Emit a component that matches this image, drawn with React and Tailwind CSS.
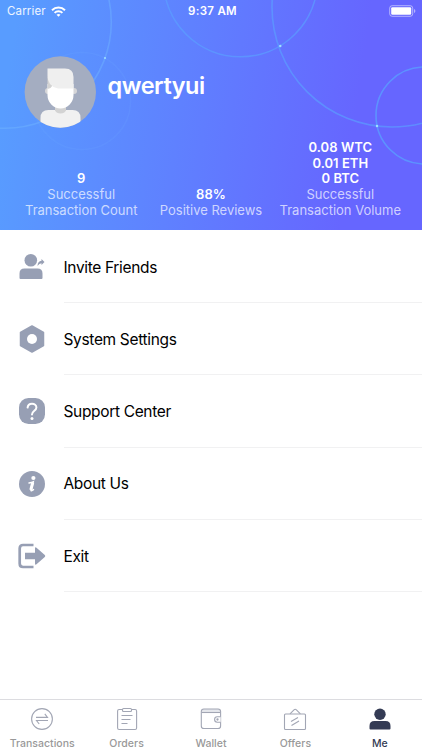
const ICON = '#979fb4';
const LINE = '#a2a6b4';

function HeaderCircles() {
  return (
    <svg className="absolute inset-0" width="422" height="230" viewBox="0 0 422 230" fill="none" strokeWidth="1.6">
      <circle cx="5" cy="22" r="106.3" stroke="#72b6ff" strokeOpacity=".45" />
      <circle cx="82" cy="101" r="48.5" stroke="#72b0ff" strokeOpacity=".13" />
      <circle cx="240.5" cy="-20.2" r="77" stroke="#5aa2ff" strokeOpacity=".65" />
      <circle cx="392" cy="7" r="120" stroke="#5aa2ff" strokeOpacity=".65" />
      <circle cx="424.5" cy="115.5" r="48.5" stroke="#5aa2ff" strokeOpacity=".75" />
      <g fill="#9fe0ff">
        <circle cx="105" cy="58" r="1" />
        <circle cx="280.3" cy="46" r="1.2" />
        <circle cx="377" cy="126" r="1.2" />
      </g>
    </svg>
  );
}

function Avatar() {
  return (
    <svg width="72" height="72" viewBox="0 0 72 72">
      <defs>
        <clipPath id="face">
          <circle cx="36.300" cy="36" r="35.7" />
        </clipPath>
      </defs>
      <g clipPath="url(#face)">
        <rect width="72" height="72" fill="#a4adc1" />
        <path d="M16.500 72V62q0-8 8-8h24q8 0 8 8v10z" fill="#f1f1f1" />
        <path d="M31 49h11v5.500q-1.500 3-5.500 3t-5.500-3z" fill="#d3d3d3" />
        <circle cx="24" cy="35" r="3" fill="#d6d6d8" />
        <circle cx="50" cy="35" r="3" fill="#d6d6d8" />
        <path d="M23.500 28h26v11a13 13.500 0 0 1-26 0z" fill="#fff" />
        <path d="M23.500 20l5 9.500-2 2.500-3 1z" fill="#d3d3d3" />
        <path d="M23.500 12.500H41q8.500 0 8.500 8.500v11.500H34q-10.500-2-10.500-13z" fill="#efefef" />
      </g>
    </svg>
  );
}

function InviteIcon() {
  return (
    <svg width="28" height="28" viewBox="0 0 28 28" fill={ICON}>
      <circle cx="12.800" cy="7.300" r="6.300" />
      <path d="M1.500 26V20.500q0-5 5-5h13q5 0 5 5V25q0 1-1 1h-21q-1 0-1-1z" />
      <path d="M19.500 13q.2-5 4-5.200V6l3 3-3 3v-1.800q-2.300.1-4 2.800z" />
    </svg>
  );
}

function SettingsIcon() {
  return (
    <svg width="28" height="28" viewBox="0 0 28 28">
      <path d="M14 1 25.500 7.500v13L14 27 2.500 20.500v-13z" fill={ICON} stroke={ICON} strokeWidth="1.500" strokeLinejoin="round" />
      <circle cx="14" cy="14" r="5" fill="#fff" />
    </svg>
  );
}

function SupportIcon() {
  return (
    <svg width="28" height="28" viewBox="0 0 28 28">
      <rect x="1" y="1" width="26" height="26" rx="9.500" fill={ICON} />
      <path d="M9.600 10.600c.2-2.500 2-3.900 4.400-3.900s4.400 1.500 4.400 3.800c0 3.200-4.400 3.300-4.400 7" fill="none" stroke="#fff" strokeWidth="2" strokeLinecap="round" />
      <circle cx="14" cy="21.500" r="1.500" fill="#fff" />
    </svg>
  );
}

function AboutIcon() {
  return (
    <svg width="28" height="28" viewBox="0 0 28 28">
      <circle cx="14" cy="14" r="13" fill={ICON} />
      <circle cx="15.400" cy="8" r="2.100" fill="#fff" />
      <path d="M11 12.900q2.700-.2 4.200-1l-2.200 8.300q-.2 1.200 2.500-.6" fill="none" stroke="#fff" strokeWidth="1.500" strokeLinecap="round" />
      <path d="M14.800 12.300l-2 7.700" stroke="#fff" strokeWidth="3" />
    </svg>
  );
}

function ExitIcon() {
  return (
    <svg width="28" height="28" viewBox="0 0 28 28">
      <path d="M15.500 3H5Q1.700 3 1.700 6.500v15Q1.700 25 5 25h10.500" fill="none" stroke={ICON} strokeWidth="2.700" />
      <path d="M7 10.800h10V6.500q0-2 1.500-.8l8.300 7.300q1 1 0 2l-8.300 7.300q-1.500 1.200-1.500-.8v-4.300H7z" fill={ICON} />
    </svg>
  );
}

function TransactionsIcon() {
  return (
    <svg width="24" height="24" viewBox="0 0 24 24" fill="none" stroke={LINE} strokeWidth="1.100">
      <circle cx="12" cy="12" r="10.400" />
      <path d="M6 10.400h11.500L14.800 6.900M18 13.500H6.500l2.700 3.500" />
    </svg>
  );
}

function OrdersIcon() {
  return (
    <svg width="24" height="24" viewBox="0 0 24 24" fill="none" stroke={LINE} strokeWidth="1.100">
      <rect x="2.600" y="2.500" width="19" height="20" rx="1.500" />
      <rect x="7.500" y="1.500" width="9" height="3" rx="1" fill="#fff" />
      <path d="M6.500 8.500h11M6.500 12.500h9M6.500 16.500h6" />
    </svg>
  );
}

function WalletIcon() {
  return (
    <svg width="24" height="24" viewBox="0 0 24 24" fill="none" stroke={LINE} strokeWidth="1.100">
      <path d="M2.500 5.500V4q0-2 2-2h15q2 0 2 2v1.500z" fill="#e5e7ec" stroke="none" />
      <rect x="2.300" y="2" width="19.300" height="19.500" rx="2.600" />
      <path d="M2.500 5.500h19" />
      <path d="M21.600 9.800h-3.300a2.700 2.700 0 0 0 0 5.400h3.300" fill="#fff" />
      <circle cx="18.500" cy="12.500" r=".6" fill={LINE} />
    </svg>
  );
}

function OffersIcon() {
  return (
    <svg width="24" height="24" viewBox="0 0 24 24" fill="none" stroke={LINE} strokeWidth="1.100">
      <rect x="1.500" y="7" width="21" height="15.500" rx="1" />
      <path d="M7 6.800l4-4q1.200-1.200 2.400 0l4 4M8 14.500l7-4M8.500 18.500l7.500-4.500" />
    </svg>
  );
}

function MeIcon() {
  return (
    <svg width="24" height="24" viewBox="0 0 24 24" fill="#343b54">
      <circle cx="12" cy="7.200" r="5.700" />
      <path d="M1.500 22.500V19q0-5 5-5h11q5 0 5 5v2.500q0 1-1 1h-19q-1 0-1-1z" />
    </svg>
  );
}

const menu = [
  { label: 'Invite Friends', Icon: InviteIcon },
  { label: 'System Settings', Icon: SettingsIcon },
  { label: 'Support Center', Icon: SupportIcon },
  { label: 'About Us', Icon: AboutIcon },
  { label: 'Exit', Icon: ExitIcon },
];

const tabs = [
  { label: 'Transactions', Icon: TransactionsIcon },
  { label: 'Orders', Icon: OrdersIcon },
  { label: 'Wallet', Icon: WalletIcon },
  { label: 'Offers', Icon: OffersIcon },
  { label: 'Me', Icon: MeIcon, active: true },
];

function StatusBar() {
  return (
    <div className="flex h-[22px] items-center justify-between pl-[7px] pr-[6px] text-[11.5px] leading-[14px]">
      <div className="flex w-[130px] items-center gap-[5px]">
        <span className="tracking-[0.15px] text-white/90">Carrier</span>
        <svg width="15" height="11" viewBox="0 0 15 11" fill="none" stroke="#fff" strokeWidth="2">
          <path d="M1 4.200a9.300 9.300 0 0 1 13 0M3.600 6.900a5.500 5.500 0 0 1 7.800 0" />
          <path d="M7.500 10.800 5.500 8.700q2-1.600 4 0z" fill="#fff" stroke="none" />
        </svg>
      </div>
      <span className="pl-[2px] font-semibold tracking-[0.3px]">9:37 AM</span>
      <div className="flex w-[130px] justify-end">
        <svg width="27" height="12" viewBox="0 0 27 12">
          <rect x=".7" y=".7" width="23" height="10.600" rx="2.500" fill="none" stroke="#fff" strokeOpacity=".5" />
          <rect x="2.200" y="2.200" width="20" height="7.600" rx="1.200" fill="#fff" />
          <path d="M25 4q1.400.5 1.400 2T25 8z" fill="#fff" fillOpacity=".5" />
        </svg>
      </div>
    </div>
  );
}

function Stat({ values, lines }) {
  return (
    <div className="flex flex-col items-center whitespace-nowrap text-[13px] leading-[15.7px]">
      {values.map((v) => (
        <span key={v} className="font-semibold tracking-[0.03px]">{v}</span>
      ))}
      {lines.map((l) => (
        <span key={l} className="tracking-[-0.01px] text-white/70">{l}</span>
      ))}
    </div>
  );
}

export default function App() {
  return (
    <div className="flex h-[750px] w-[422px] flex-col overflow-hidden bg-white font-['Inter','Liberation_Sans',sans-serif]">
      <header className="relative h-[230px] shrink-0 overflow-hidden bg-[linear-gradient(98deg,#589cff_4%,#6666ff_82%)] text-white">
        <HeaderCircles />
        <div className="relative flex h-full flex-col">
          <StatusBar />
          <div className="mt-[34px] flex items-center pl-[24px]">
            <Avatar />
            <h1 className="-mt-[13px] ml-[11.500px] text-[23.500px] font-semibold leading-[30px] tracking-[-0.45px]">qwertyui</h1>
          </div>
          <div className="mt-auto flex items-end justify-between pb-[11.500px] pl-[25px] pr-[21px]">
            <Stat values={['9']} lines={['Successful', 'Transaction Count']} />
            <div className="pl-[5px]">
              <Stat values={['88%']} lines={['Positive Reviews']} />
            </div>
            <Stat values={['0.08 WTC', '0.01 ETH', '0 BTC']} lines={['Successful', 'Transaction Volume']} />
          </div>
        </div>
      </header>

      <main className="flex-1 pt-[0.800px]">
        {menu.map(({ label, Icon }) => (
          <div key={label} className="flex h-[72.250px] items-center pl-[18px]">
            <Icon />
            <div className="ml-[17.500px] flex h-full flex-1 items-center border-b border-[#f1f1f2] text-[15.500px] tracking-[-0.340px] text-black">
              <span className="pt-[1.500px]">{label}</span>
            </div>
          </div>
        ))}
      </main>

      <nav className="grid h-[51px] shrink-0 grid-cols-5 border-t border-[#dcdce0]">
        {tabs.map(({ label, Icon, active }) => (
          <div key={label} className="flex flex-col items-center pt-[7px]">
            <Icon />
            <span className={`mt-[5.500px] text-[10.500px] font-medium leading-[14px] tracking-[0.03px] ${active ? 'text-[#343b54]' : 'text-[#999]'}`}>{label}</span>
          </div>
        ))}
      </nav>
    </div>
  );
}
